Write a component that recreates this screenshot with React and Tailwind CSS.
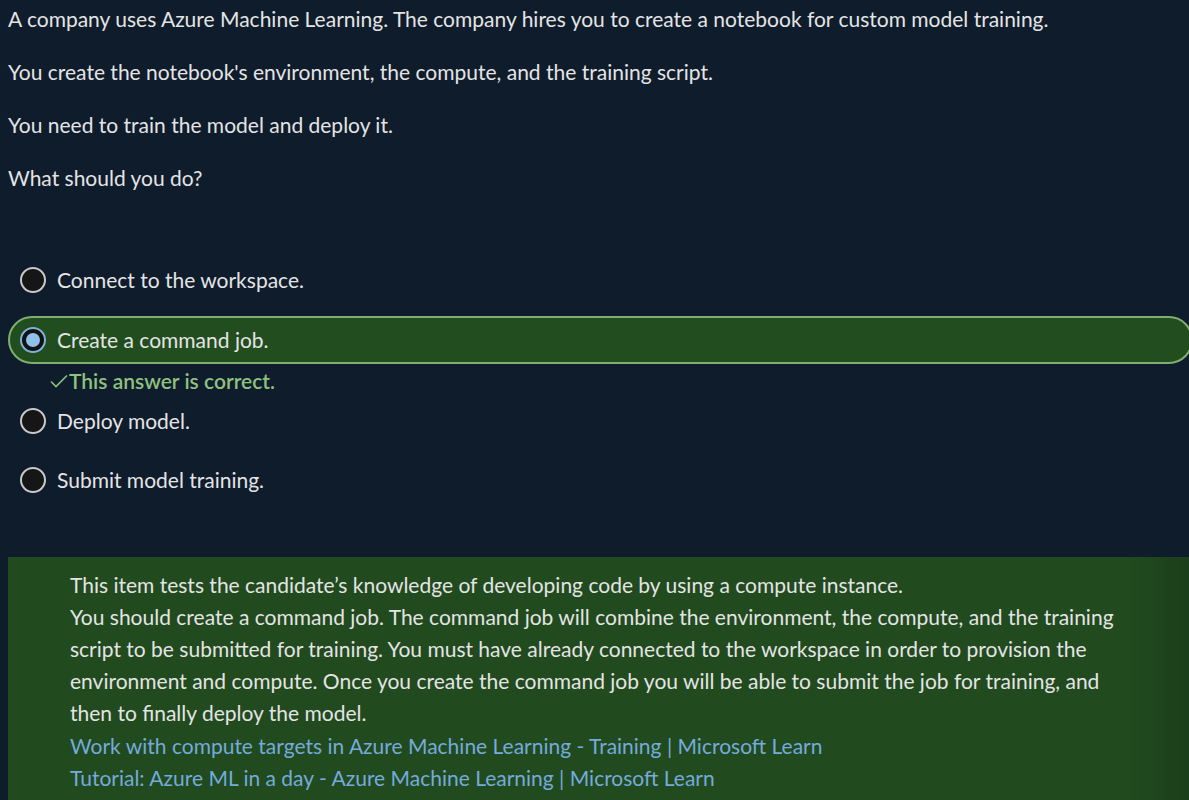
import React from "react";

const options = [
  { id: 1, text: "Connect to the workspace." },
  { id: 2, text: "Create a command job.", selected: true },
  { id: 3, text: "Deploy model." },
  { id: 4, text: "Submit model training." },
];

const Radio = ({ checked }) =>
  checked ? (
    <span className="flex items-center justify-center w-[26px] h-[26px] rounded-full border-2 border-[#7fb1de] bg-[#121212] shrink-0">
      <span className="w-[14px] h-[14px] rounded-full bg-[#8ec0ea]" />
    </span>
  ) : (
    <span className="w-[26px] h-[26px] rounded-full border-2 border-[#c9c9c9] bg-[#161616] shrink-0" />
  );

export default function App() {
  return (
    <div
      className="w-full h-[800px] overflow-hidden bg-[#0f1c2c] text-[#e4e4e4] text-[21px]"
      style={{ fontFamily: "Lato, 'Noto Sans', sans-serif" }}
    >
      {/* Question */}
      <div className="pl-2 pt-[5px] flex flex-col gap-[25px] leading-[28px]">
        <p>A company uses Azure Machine Learning. The company hires you to create a notebook for custom model training.</p>
        <p>You create the notebook's environment, the compute, and the training script.</p>
        <p>You need to train the model and deploy it.</p>
        <p>What should you do?</p>
      </div>

      {/* Options */}
      <div className="mt-[64px] pl-2">
        {options.map((o) => (
          <div key={o.id}>
            {o.selected ? (
              <>
                <div className="mr-[-4px] h-[48px] flex items-center gap-[11px] pl-[10px] rounded-full border-2 border-[#7fae70] bg-[#214d1f]">
                  <Radio checked />
                  <span>{o.text}</span>
                </div>
                <div className="h-[33px] flex items-center pl-[42px] text-[#8fc17f] font-semibold">
                  <svg width="18" height="14" viewBox="0 0 18 14" className="mr-[1px]">
                    <path d="M1 7.5 L6 12.5 L17 1.5" fill="none" stroke="#8fc17f" strokeWidth="1.6" />
                  </svg>
                  This answer is correct.
                </div>
              </>
            ) : (
              <div className={`h-[48px] flex items-center gap-[11px] pl-[12px] ${o.id === 1 ? "mb-[12px]" : ""} ${o.id === 3 ? "mb-[11px]" : ""}`}>
                <Radio />
                <span>{o.text}</span>
              </div>
            )}
          </div>
        ))}
      </div>

      {/* Explanation */}
      <div className="mt-[53px] ml-2 pl-[62px] pr-[40px] pt-[12px] pb-[12px] leading-[32px] bg-gradient-to-r from-[#214a1f] from-95% to-[#1b3f1a]">
        <p>This item tests the candidate’s knowledge of developing code by using a compute instance.</p>
        <p>
          You should create a command job. The command job will combine the environment, the compute, and the training
          <br />
          script to be submitted for training. You must have already connected to the workspace in order to provision the
          <br />
          environment and compute. Once you create the command job you will be able to submit the job for training, and
          <br />
          then to finally deploy the model.
        </p>
        <p className="text-[#75aadb] mt-[1px]">Work with compute targets in Azure Machine Learning - Training | Microsoft Learn</p>
        <p className="text-[#75aadb]">Tutorial: Azure ML in a day - Azure Machine Learning | Microsoft Learn</p>
      </div>
    </div>
  );
}
